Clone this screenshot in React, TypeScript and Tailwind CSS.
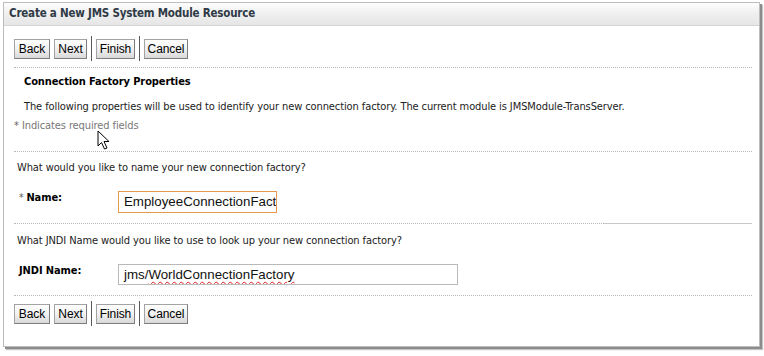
import React from "react";

const ui = { fontFamily: "'DejaVu Sans Condensed', 'DejaVu Sans', sans-serif", fontStretch: "condensed" };
const arial = { fontFamily: "'Liberation Sans', Arial, sans-serif", fontStretch: "normal" };

function Btn({ label, w }: { label: string; w: string }) {
  return (
    <button
      style={arial}
      className={`${w} h-[20px] px-0 text-[12px] leading-none text-black border border-[#a3a3a3] border-b-[#7d7d7d] border-r-[#7d7d7d] bg-gradient-to-b from-white via-[#f1f1f1] to-[#d9d9d9]`}
    >
      {label}
    </button>
  );
}

function Sep() {
  return <div className="w-px h-[25px] bg-[#5a5a5a]" />;
}

function ButtonBar() {
  return (
    <div className="flex items-center gap-[4px] h-[25px]">
      <Btn label="Back" w="w-[36px]" />
      <Btn label="Next" w="w-[33px]" />
      <Sep />
      <Btn label="Finish" w="w-[39px]" />
      <Sep />
      <Btn label="Cancel" w="w-[44px]" />
    </div>
  );
}

function Dotted({ split }: { split?: boolean }) {
  if (split) {
    return (
      <div className="flex mr-[7px]">
        <div className="flex-1 border-t border-dotted border-[#b8b8b8]" />
        <div className="w-[148px] border-t border-[#c8c8c8]" />
      </div>
    );
  }
  return <div className="border-t border-dotted border-[#b8b8b8] mr-[7px]" />;
}

function Cursor() {
  return (
    <svg className="absolute left-[97px] top-[130px]" width="14" height="21" viewBox="0 0 14 21">
      <path d="M1 1 L1 16 L4.5 12.5 L7.5 19 L10 18 L7 11.5 L12 11.5 Z" fill="#fff" stroke="#000" strokeWidth="1" strokeLinejoin="miter" />
    </svg>
  );
}

export default function App() {
  return (
    <div className="w-[764px] h-[356px] bg-white relative" style={ui}>
      <div className="absolute left-[3px] top-[2px] w-[757px] h-[345px] border border-[#bdbdbd] shadow-[2px_2px_0_#8c8c8c,3px_3px_1px_#c4c4c4] bg-white">
        {/* Header */}
        <div className="h-[23px] border-b border-[#d4d4d4] bg-gradient-to-b from-[#fdfdfd] via-[#efefef] to-[#e6e6e6] flex items-center pl-[5px]">
          <span className="text-[11.5px] font-bold text-[#2f3a46] tracking-[-0.2px]">
            Create a New JMS System Module Resource
          </span>
        </div>

        <div className="pl-[10px] text-[11px] leading-[14px] tracking-[-0.1px]">
          <div className="mt-[10px]">
            <ButtonBar />
          </div>
          <div className="mt-[6px]">
            <Dotted />
          </div>

          <div className="pl-[10px] mt-[7px] font-bold text-black">Connection Factory Properties</div>
          <div className="pl-[10px] mt-[11px] text-[#222]">
            The following properties will be used to identify your new connection factory. The current module is JMSModule-TransServer.
          </div>
          <div className="mt-[5px] text-[#777]">
            <span className="text-[#666]">*</span> Indicates required fields
          </div>

          <div className="mt-[18px]">
            <Dotted />
          </div>
          <div className="pl-[3px] mt-[9px] text-[#222]">What would you like to name your new connection factory?</div>

          <div className="flex items-start mt-[16px]">
            <div className="w-[104px] pl-[5px] font-bold text-black">
              <span className="text-[#555] font-normal text-[10px] mr-[3px]">*</span>Name:
            </div>
            <div
              style={arial}
              className="w-[159px] h-[22px] border border-[#e39a4e] bg-white pl-[5px] text-[13.3px] leading-[20px] tracking-normal text-[#111] overflow-hidden whitespace-nowrap"
            >
              EmployeeConnectionFactory
            </div>
          </div>

          <div className="mt-[10px]">
            <Dotted split />
          </div>
          <div className="pl-[3px] mt-[10px] text-[#222]">What JNDI Name would you like to use to look up your new connection factory?</div>

          <div className="flex items-start mt-[16px]">
            <div className="w-[104px] pl-[5px] font-bold text-black">JNDI Name:</div>
            <div
              style={arial}
              className="w-[340px] h-[21px] border border-[#b9b9b9] bg-white pl-[5px] text-[13.3px] leading-[19px] tracking-normal text-[#111] overflow-hidden whitespace-nowrap"
            >
              jms/<span className="underline decoration-wavy decoration-[#e02020] decoration-1 underline-offset-2">WorldConnectionFactory</span>
            </div>
          </div>

          <div className="mt-[10px]">
            <Dotted />
          </div>
          <div className="mt-[5px]">
            <ButtonBar />
          </div>
        </div>
      </div>
      <Cursor />
    </div>
  );
}
